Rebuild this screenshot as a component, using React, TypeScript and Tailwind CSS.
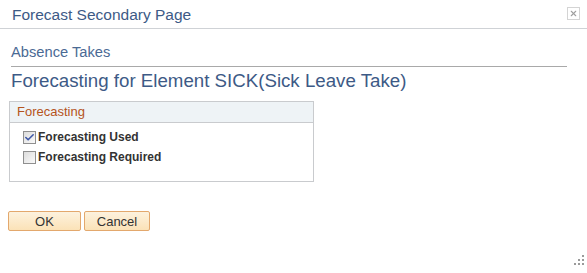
import { Check, X } from 'lucide-react';

function CheckBox({ checked }: { checked: boolean }) {
  return (
    <span className="w-[13px] h-[13px] border border-[#8f8f8f] bg-gradient-to-br from-[#dcdcdc] to-[#fafafa] flex items-center justify-center">
      {checked && <Check className="w-[11px] h-[11px] text-[#3f58a8]" strokeWidth={3.5} />}
    </span>
  );
}

function Grip() {
  const dots = [
    [8, 0],
    [8, 4],
    [4, 4],
    [8, 8],
    [4, 8],
    [0, 8],
  ];
  return (
    <svg width="11" height="11" viewBox="0 0 11 11" className="absolute right-[2px] bottom-[7px]">
      {dots.map(([x, y], i) => (
        <rect key={i} x={x} y={y} width="2" height="2" fill="#9a9a9a" />
      ))}
    </svg>
  );
}

export default function App() {
  return (
    <div className="relative w-[587px] h-[273px] bg-white overflow-hidden font-['Liberation_Sans',Arial,sans-serif]">
      <header className="h-[29px] border-b border-[#cfd2d6] flex items-center justify-between pl-[12px] pr-[7px]">
        <h1 className="text-[15.5px] text-[#3d5a86] leading-none pt-[1px]">Forecast Secondary Page</h1>
        <button className="w-[13px] h-[13px] border border-[#d4d4d4] flex items-center justify-center mb-[1px]">
          <X className="w-[9px] h-[9px] text-[#a0a0a0]" strokeWidth={3} />
        </button>
      </header>

      <div className="px-[11px] pr-[20px] pt-[15px]">
        <div className="text-[14.7px] text-[#4b6a94] leading-[17px] pb-[5px] border-b border-[#a9a9a9]">
          Absence Takes
        </div>
        <h2 className="text-[18.7px] text-[#3d5a86] leading-[22px] pt-[3px]">
          Forecasting for Element SICK(Sick Leave Take)
        </h2>
      </div>

      <section className="ml-[9px] mt-[9px] w-[305px] h-[81px] border border-[#c9cbce]">
        <div className="h-[21px] bg-[#eef3f6] border-b border-[#c9cbce] px-[7px] flex items-center">
          <span className="text-[13px] text-[#b5541c]">Forecasting</span>
        </div>
        <div className="pl-[13px] pt-[8px] flex flex-col gap-[7px]">
          <label className="flex items-center gap-[2px]">
            <CheckBox checked />
            <span className="text-[12px] font-bold text-[#333] leading-[13px]">Forecasting Used</span>
          </label>
          <label className="flex items-center gap-[2px]">
            <CheckBox checked={false} />
            <span className="text-[12px] font-bold text-[#333] leading-[13px]">Forecasting Required</span>
          </label>
        </div>
      </section>

      <div className="ml-[8px] mt-[29px] flex gap-[3px]">
        <button className="w-[73px] h-[20px] rounded-[2px] border border-[#e3a86d] bg-gradient-to-b from-[#fdf2de] to-[#fbe2b7] text-[13px] text-[#333] leading-none">
          OK
        </button>
        <button className="w-[66px] h-[20px] rounded-[2px] border border-[#e3a86d] bg-gradient-to-b from-[#fdf2de] to-[#fbe2b7] text-[13px] text-[#333] leading-none">
          Cancel
        </button>
      </div>

      <Grip />
    </div>
  );
}
